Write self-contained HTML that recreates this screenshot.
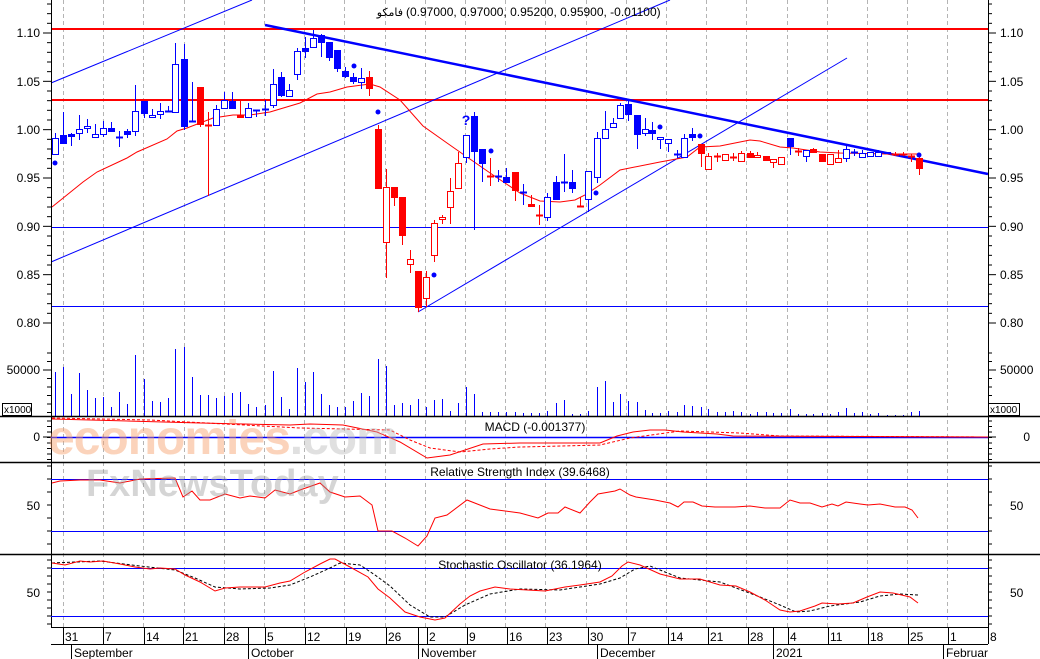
<!DOCTYPE html>
<html><head><meta charset="utf-8"><style>
html,body{margin:0;padding:0;background:#fff;width:1040px;height:659px;overflow:hidden}
svg{display:block;font-family:"Liberation Sans","DejaVu Sans",sans-serif}
</style></head><body>
<svg id="s" width="1040" height="659" viewBox="0 0 1040 659" xmlns="http://www.w3.org/2000/svg">
<rect width="1040" height="659" fill="#fff"/>
<g id="g"></g>
<text x="403" y="16" font-size="11" fill="#000" text-anchor="end" font-family="'Liberation Sans','DejaVu Sans',sans-serif">فامکو</text>
<text x="406" y="16" font-size="12" fill="#000" font-family="'Liberation Sans',sans-serif">(0.97000, 0.97000, 0.95200, 0.95900, -0.01100)</text>
<text x="48" y="454" font-size="48" fill="#f7a06a" opacity="0.45" font-weight="bold" letter-spacing="-1">economies<tspan fill="#bbb">.com</tspan></text>
<text x="86" y="496" font-size="38" fill="#999" opacity="0.4" font-weight="bold">FxNewsToday</text>
</svg>
<script>
var g=document.getElementById('g'),h='';
function L(x1,y1,x2,y2,c,w,d){h+='<line x1="'+x1+'" y1="'+y1+'" x2="'+x2+'" y2="'+y2+'" stroke="'+c+'" stroke-width="'+(w||1)+'"'+(d?' stroke-dasharray="'+d+'"':'')+'/>';}
function P(pts,c,w,d){h+='<polyline fill="none" points="'+pts.map(function(p){return p.join(',')}).join(' ')+'" stroke="'+c+'" stroke-width="'+(w||1)+'"'+(d?' stroke-dasharray="'+d+'"':'')+'/>';}
function T(x,y,t,a,s){h+='<text x="'+x+'" y="'+y+'" font-size="'+(s||12)+'" text-anchor="'+(a||'start')+'">'+t+'</text>';}
var B='#0000ff',R='#ff0000';
for(var i=0;i<24;i++){var x=63+i*40.2;x=Math.round(x)+0.5;L(x,0,x,627,'#b4b4b4',1,'4,3');}
L(51,29,988,29,R,2);L(51,100,988,100,R,2);
L(51,227.5,988,227.5,B,1);L(51,306.5,988,306.5,B,1);
L(51,83,252,0,B,1);L(51,262,670,0,B,1);L(418,312,847,58,B,1);
L(265,25,988,174,B,2.5);
P([[52,207],[83,182],[97,172],[127,158],[137,152],[167,139],[177,131],[187,128],[213,118],[233,115],[250,115],[270,112],[300,103],[317,94],[330,92],[347,87],[370,84],[380,87],[400,100],[423,126],[447,143],[467,157],[493,175],[520,193],[540,201],[560,202],[575,200],[585,195],[600,185],[620,170],[660,162],[687,157],[700,147],[720,146],[740,142],[750,140],[760,141],[780,147],[793,148],[820,152],[840,153],[887,154],[918,154]],R,1);
var C=[[55,138,154,133,154,B,0],[63,135,143,112,143,B,1],[71,134,136,133,146,B,1],[79,129,133,115,140,B,0],[87,126,128,119,133,B,0],[95,134,137,124,137,B,0],[103,128,134,121,137,B,0],[111,128,131,122,131,B,1],[119,137,137,131,147,B,1],[127,131,134,129,138,B,1],[135,111,131,85,136,B,0],[144,101,113,101,118,B,1],[152,115,117,109,118,B,0],[160,111,114,103,119,B,0],[168,111,111,106,112,B,1],[175,64,112,43,112,B,0],[184,59,126,44,130,B,1],[192,121,121,82,121,B,1],[200,87,124,87,127,R,1],[208,125,125,112,196,R,1],[216,109,125,105,125,B,0],[224,100,108,92,108,B,0],[232,101,108,92,108,B,1],[240,115,117,100,117,R,1],[248,108,117,103,118,B,0],[256,110,110,110,117,B,1],[265,109,109,100,116,B,1],[273,84,105,69,108,B,0],[281,77,95,72,97,B,1],[289,90,96,84,96,B,0],[297,51,74,48,80,B,0],[305,48,51,37,58,B,1],[313,38,47,30,48,B,0],[321,35,42,34,57,B,1],[329,42,57,42,61,B,1],[337,50,68,50,72,B,1],[345,71,76,67,78,B,1],[353,77,81,73,84,B,1],[361,78,82,68,89,B,0],[369,77,88,71,96,R,1],[378,129,188,125,188,R,1],[386,187,242,169,278,R,0],[394,187,197,187,206,R,1],[402,197,235,197,245,R,1],[410,259,264,250,273,R,0],[418,271,307,271,312,R,1],[426,277,298,271,307,R,0],[434,223,255,220,262,R,0],[442,217,219,215,224,R,0],[450,191,207,178,224,R,0],[458,163,188,152,188,R,0],[466,135,157,135,163,B,0],[474,116,151,112,230,B,1],[482,149,163,149,182,B,1],[490,176,176,158,186,R,1],[498,176,176,170,182,B,1],[506,177,182,168,182,B,1],[515,172,190,172,201,R,1],[523,192,192,184,205,B,1],[531,204,206,195,207,R,1],[539,215,215,205,225,R,1],[547,197,217,193,221,B,0],[556,182,199,176,199,B,1],[564,182,182,154,192,B,1],[572,182,188,170,193,B,1],[580,206,206,197,207,R,1],[588,171,199,171,212,B,0],[597,138,177,132,183,B,0],[605,129,138,111,138,B,0],[613,123,127,118,128,B,0],[620,105,118,103,118,B,0],[628,104,114,100,121,B,1],[637,115,134,115,149,B,1],[645,129,133,118,136,B,0],[652,130,133,122,140,B,1],[660,137,139,137,149,B,0],[668,139,143,139,152,B,0],[677,154,154,150,158,B,1],[684,138,157,134,157,B,0],[692,134,137,128,141,B,1],[701,144,153,144,167,R,1],[708,156,169,153,169,R,0],[717,156,156,153,162,R,1],[725,154,160,154,160,R,0],[733,157,157,153,161,R,1],[741,153,161,151,161,R,0],[750,153,157,151,157,R,1],[757,155,157,152,157,R,0],[766,156,160,156,160,R,1],[773,159,162,159,168,R,0],[781,157,164,157,164,R,0],[790,138,146,138,155,B,1],[798,151,151,148,156,R,1],[806,150,156,150,162,B,0],[813,149,152,148,152,R,1],[822,154,161,154,161,R,1],[830,154,164,154,164,R,0],[838,158,162,150,162,R,0],[846,149,158,145,162,B,0],[854,152,152,149,156,B,1],[862,153,157,150,158,B,0],[870,152,156,152,156,B,0],[878,152,156,150,156,B,0],[887,152,153,152,153,B,1],[895,154,154,152,156,R,1],[903,154,154,152,156,R,1],[911,156,156,154,162,R,1],[919,158,168,155,175,R,1]];
C.forEach(function(c){var x=c[0];L(x+0.5,c[3],x+0.5,c[4],c[5],1);
 if(c[2]-c[1]<1){L(x-3,c[1]+0.5,x+4,c[1]+0.5,c[5],2);}
 else h+='<rect x="'+(x-2.5)+'" y="'+c[1]+'.5" width="6" height="'+(c[2]-c[1])+'" fill="'+(c[6]?c[5]:'#fff')+'" stroke="'+c[5]+'"/>';});
[[55,163],[354,66],[378,112],[434,275],[491,151],[596,193],[660,127],[700,136],[919,155]].forEach(function(d){h+='<circle cx="'+d[0]+'" cy="'+d[1]+'" r="2.5" fill="'+B+'"/>';});
h+='<text x="466" y="125" font-size="14" font-weight="bold" fill="'+B+'" text-anchor="middle">?</text>';
var V={55:372,63:367,71:394,79:373,87:390,95:398,103:397,111:407,119:392,127:404,135:355,144:379,152:401,160:402,168:398,175:349,184:347,192:377,200:395,208:395,216:398,224:396,232:393,240:392,248:404,256:407,265:405,273:371,281:397,289:409,297:368,305:382,313:372,321:394,329:405,337:407,345:407,353:401,361:393,369:396,378:359,386:366,394:405,402:403,410:405,418:399,426:407,434:400,442:399,450:411,458:403,466:387,474:394,482:412,490:412,498:412,506:412,515:412,523:413,531:413,539:413,547:411,556:403,564:400,572:414,580:414,588:411,597:387,605:381,613:402,620:394,628:401,637:402,645:410,652:413,660:413,668:411,677:412,684:405,692:406,701:407,708:409,717:412,725:412,733:411,741:412,750:414,757:412,766:412,773:413,781:413,790:409,798:414,806:414,813:414,822:413,830:414,838:412,846:408,854:413,862:412,870:414,878:413,887:415,895:415,903:415,911:412,919:411};
for(var k in V)L(+k+0.5,V[k],+k+0.5,416,B,1);
[416,462,554].forEach(function(y){L(0,y+0.5,1040,y+0.5,'#000',1.5);});
L(51,627.5,988,627.5,'#000',1);L(51,644.5,988,644.5,'#000',1);
L(51.5,0,51.5,628,'#000',1);L(988.5,0,988.5,628,'#000',1);
for(var p=0;p<=33;p++){var y=323-p*9.667;if(y<0)break;var big=(p%5==0);L(big?43:47,y,51,y,'#000',1);L(988,y,big?996:992,y,'#000',1);}
[['1.10',33],['1.05',82],['1.00',130],['0.95',178],['0.90',227],['0.85',275],['0.80',323]].forEach(function(a){T(40,a[1]+4,a[0],'end');T(1000,a[1]+4,a[0],'start');});
for(var y=353;y<416;y+=8.5){L(47,y,51,y,'#000');L(988,y,992,y,'#000');}
L(43,370,51,370,'#000');L(988,370,996,370,'#000');
T(40,374,'50000','end');T(1000,374,'50000','start');
h+='<rect x="2.5" y="403.5" width="29" height="12" fill="#fff" stroke="#000"/><rect x="988.5" y="403.5" width="31" height="12" fill="#fff" stroke="#000"/>';
T(4,413,'x1000','start',10);T(990,413,'x1000','start',10);
for(var y=421;y<462;y+=5.5){L(47,y,51,y,'#000');L(988,y,992,y,'#000');}
L(43,437,51,437,'#000');L(988,437,996,437,'#000');
T(40,441,'0','end');T(1030,441,'0','end');
for(var y=466;y<554;y+=13){L(47,y,51,y,'#000');L(988,y,992,y,'#000');}
T(40,510,'50','end');T(1010,510,'50','start');
for(var y=560;y<627;y+=8){L(47,y,51,y,'#000');L(988,y,992,y,'#000');}
T(40,597,'50','end');T(1010,597,'50','start');
L(51,437.5,988,437.5,B,1.5);
T(535,431,'MACD (-0.001377)','middle');
P([[52,418],[150,420],[300,428],[390,430],[410,440],[430,448],[460,452],[490,449],[520,447],[600,445],[630,438],[680,431],[740,433],[780,436],[988,437]],R,1,'3,2');
P([[52,419],[200,423],[290,425],[310,424],[343,425],[377,432],[400,442],[427,458],[450,455],[483,444],[520,443],[600,443],[617,436],[633,432],[650,430],[665,430],[683,432],[700,433],[717,434],[733,436],[988,437]],R,1);
L(51,479.5,988,479.5,B,1);L(51,531.5,988,531.5,B,1);
T(520,476,'Relative Strength Index (39.6468)','middle');
P([[52,483],[60,481],[80,480],[100,480],[120,483],[140,479],[175,478],[183,497],[192,491],[200,500],[210,500],[225,494],[240,498],[250,496],[265,498],[275,490],[290,494],[300,490],[320,483],[330,492],[345,497],[360,496],[372,505],[378,531],[392,531],[405,538],[418,546],[427,536],[435,518],[447,515],[467,500],[490,509],[520,513],[538,518],[548,513],[558,513],[565,507],[580,513],[590,502],[598,494],[615,491],[620,489],[630,495],[636,497],[655,500],[670,503],[678,507],[684,502],[693,502],[702,506],[715,507],[735,507],[750,506],[765,508],[780,508],[790,500],[800,503],[810,503],[822,507],[832,504],[838,506],[846,502],[860,504],[868,505],[880,504],[895,507],[905,507],[912,510],[918,518]],R,1);
L(51,568.5,988,568.5,B,1);L(51,616.5,988,616.5,B,1);
T(520,569,'Stochastic Oscillator (36.1964)','middle');
P([[52,563],[100,561],[140,566],[175,570],[195,578],[215,587],[240,589],[270,588],[290,585],[310,577],[330,568],[340,563],[360,565],[375,575],[390,586],[410,605],[430,617],[445,617],[465,605],[490,594],[520,589],[560,590],[600,584],[620,578],[635,569],[650,566],[680,578],[720,582],[760,597],[780,605],[796,612],[810,611],[830,606],[860,602],[880,596],[900,594],[918,595]],'#000',1,'3,2');
P([[52,563],[65,565],[80,561],[90,562],[103,561],[120,564],[135,567],[150,569],[160,568],[175,569],[185,575],[200,582],[215,591],[225,588],[240,587],[265,587],[280,583],[290,581],[305,572],[320,564],[330,559],[335,559],[350,567],[368,577],[378,589],[390,598],[405,612],[420,617],[435,620],[445,618],[460,604],[470,596],[480,591],[495,587],[510,589],[545,591],[565,587],[580,585],[600,582],[612,576],[622,566],[628,562],[640,565],[660,574],[680,579],[700,579],[720,585],[736,586],[750,592],[765,600],[780,610],[790,612],[800,611],[815,606],[822,603],[838,604],[853,603],[867,597],[880,592],[893,593],[910,597],[918,603]],R,1);
var D=[[63,'31'],[103,'7'],[144,'14'],[183,'21'],[224,'28'],[265,'5'],[305,'12'],[346,'19'],[386,'26'],[427,'2'],[467,'9'],[507,'16'],[547,'23'],[588,'30'],[628,'7'],[668,'14'],[708,'21'],[748,'28'],[788,'4'],[828,'11'],[868,'18'],[908,'25'],[948,'1'],[988,'8']];
D.forEach(function(d){L(d[0]+0.5,628,d[0]+0.5,644,'#000');T(d[0]+2,641,d[1]);});
[248,418,773].forEach(function(x){L(x+0.5,628,x+0.5,644,'#000');});
[[71,'September'],[248,'October'],[418,'November'],[597,'December'],[773,'2021'],[943,'Februar']].forEach(function(m){L(m[0]+0.5,645,m[0]+0.5,659,'#000');T(m[0]+3,657,m[1]);});
g.innerHTML=h;
</script>
</body></html>
